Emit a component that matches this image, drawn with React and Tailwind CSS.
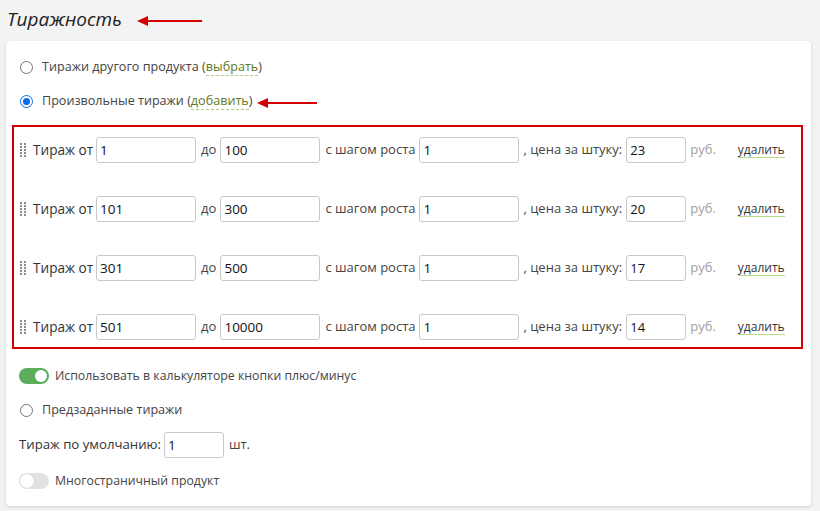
import { useState } from "react"

function Arrow({ width }) {
  return (
    <svg width={width} height="10" viewBox={`0 0 ${width} 10`} className="block">
      <polygon points="0,5 11,0 11,10" fill="#d40000" />
      <rect x="10" y="4" width={width - 10} height="2" fill="#d40000" />
    </svg>
  )
}

function Radio({ checked }) {
  return checked ? (
    <span className="inline-flex h-[13px] w-[13px] items-center justify-center rounded-full border border-[#0a6ee8] bg-white">
      <span className="h-[7px] w-[7px] rounded-full bg-[#0a6ee8]" />
    </span>
  ) : (
    <span className="inline-block h-[13px] w-[13px] rounded-full border border-[#767676] bg-white" />
  )
}

function Toggle({ on }) {
  return on ? (
    <span className="relative inline-block h-[16px] w-[30px] rounded-full bg-[#5cae5b]">
      <span className="absolute right-[2px] top-[2px] h-[12px] w-[12px] rounded-full bg-white" />
    </span>
  ) : (
    <span className="relative inline-block h-[16px] w-[30px] rounded-full bg-[#e2e2e2]">
      <span className="absolute left-[1px] top-[1px] h-[14px] w-[14px] rounded-full bg-white shadow-[0_0_1px_rgba(0,0,0,0.2)]" />
    </span>
  )
}

function Handle() {
  return (
    <svg width="6" height="14" viewBox="0 0 6 14" className="block shrink-0">
      {[0, 1, 2, 3, 4].map((r) =>
        [0, 1].map((c) => <rect key={`${r}-${c}`} x={c * 4} y={r * 3} width="2" height="2" fill="#8a8a8a" />)
      )}
    </svg>
  )
}

const inputCls =
  "h-[26px] shrink-0 rounded-[3px] border border-[#c9c9c9] bg-white px-[3px] text-[13.5px] text-[#111] outline-none"

export default function App() {
  const [rows] = useState([
    { from: "1", to: "100", step: "1", price: "23" },
    { from: "101", to: "300", step: "1", price: "20" },
    { from: "301", to: "500", step: "1", price: "17" },
    { from: "501", to: "10000", step: "1", price: "14" },
  ])

  return (
    <div className="min-h-[511px] w-[820px] bg-[#f3f3f3] pl-[6px] pr-[9px] font-['Open_Sans',sans-serif] text-[13px] text-[#444]">
      <div className="flex h-[41px] items-center pb-[2px]">
        <h1 className="pl-[1px] text-[19px] italic leading-none text-[#222]">Тиражность</h1>
        <span className="ml-[15px] mt-[2px]">
          <Arrow width={65} />
        </span>
      </div>

      <div className="rounded-[4px] bg-white pb-[14px] pt-[15px] shadow-[0_1px_3px_rgba(0,0,0,0.15)]">
        <div className="flex h-[22px] items-center pl-[14px]">
          <Radio />
          <span className="ml-[9px] text-[12.6px]">
            Тиражи другого продукта (
            <span className="border-b border-dashed border-[#b5cc7c] text-[#5f7a24]">выбрать</span>)
          </span>
        </div>
        <div className="mt-[12px] flex h-[22px] items-center pl-[14px]">
          <Radio checked />
          <span className="ml-[9px] text-[12.6px]">
            Произвольные тиражи (
            <span className="border-b border-dashed border-[#b5cc7c] text-[#5f7a24]">добавить</span>)
          </span>
          <span className="ml-[5px] mt-[3px]">
            <Arrow width={60} />
          </span>
        </div>

        <div className="ml-[6px] mr-[8px] mt-[13px] flex flex-col gap-[33px] border-2 border-[#d40000] pb-[7px] pt-[10px]">
          {rows.map((row, i) => (
            <div key={i} className="flex h-[26px] items-center whitespace-nowrap pl-[6px]">
              <Handle />
              <span className="ml-[7px] mr-[3px] text-[13.6px] text-[#333]">Тираж от</span>
              <input className={`${inputCls} w-[100px]`} defaultValue={row.from} />
              <span className="ml-[5px] mr-[4px]">до</span>
              <input className={`${inputCls} w-[100px]`} defaultValue={row.to} />
              <span className="ml-[5px] mr-[4px]">с шагом роста</span>
              <input className={`${inputCls} w-[100px]`} defaultValue={row.step} />
              <span className="ml-[4px] mr-[4px]">, цена за штуку:</span>
              <input className={`${inputCls} w-[60px] text-[13px]`} defaultValue={row.price} />
              <span className="ml-[4px] text-[#a0a0a0]">руб.</span>
              <span className="ml-[22px] border-b border-[#b8db84] text-[12px] leading-[15px] text-[#333]">удалить</span>
            </div>
          ))}
        </div>

        <div className="mt-[16px] flex h-[22px] items-center pl-[13px]">
          <Toggle on />
          <span className="ml-[6px] text-[12.3px]">Использовать в калькуляторе кнопки плюс/минус</span>
        </div>
        <div className="mt-[12px] flex h-[22px] items-center pl-[14px]">
          <Radio />
          <span className="ml-[9px] text-[12.6px]">Предзаданные тиражи</span>
        </div>
        <div className="mt-[11px] flex h-[26px] items-center pl-[13px]">
          <span className="mr-[3px] text-[13.2px] text-[#333]">Тираж по умолчанию:</span>
          <input className={`${inputCls} w-[60px]`} defaultValue="1" />
          <span className="ml-[5px]">шт.</span>
        </div>
        <div className="mt-[12px] flex h-[22px] items-center pl-[13px]">
          <Toggle />
          <span className="ml-[6px] text-[12.3px]">Многостраничный продукт</span>
        </div>
      </div>
    </div>
  )
}
